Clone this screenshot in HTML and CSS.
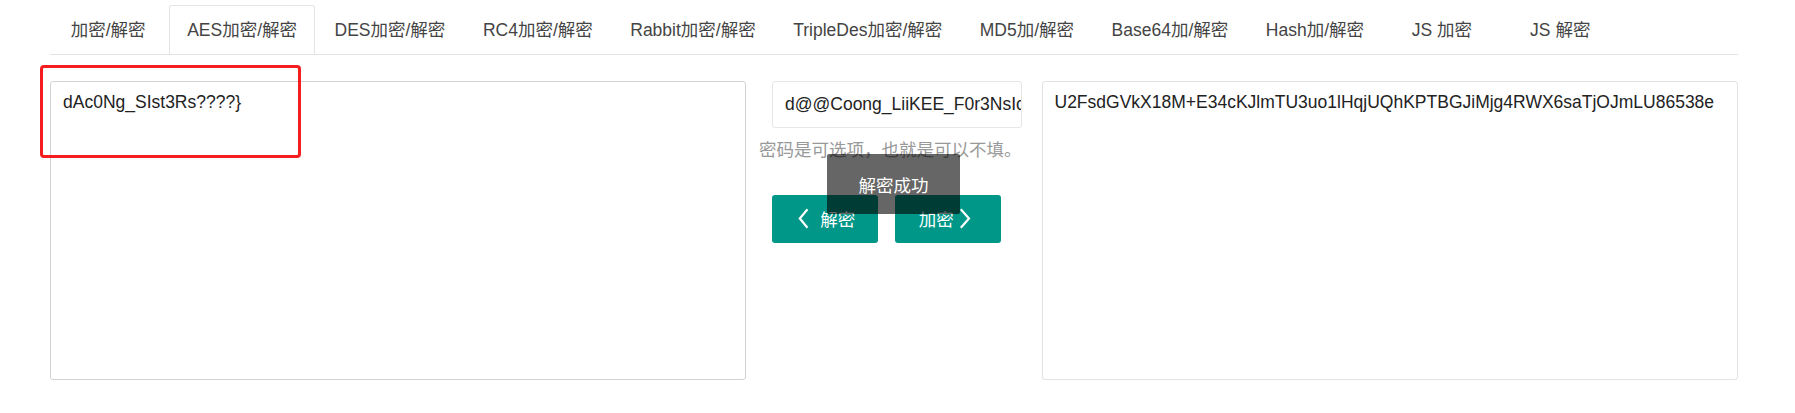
FILE: index.html
```html
<!DOCTYPE html>
<html lang="zh-CN">
<head>
<meta charset="utf-8">
<title>AES加密/解密</title>
<link rel="stylesheet" href="styles.css">
</head>
<body>
<div class="page">
  <ul class="tabs">
    <li class="tab tab-first">加密/解密</li>
    <li class="tab active">AES加密/解密</li>
    <li class="tab">DES加密/解密</li>
    <li class="tab">RC4加密/解密</li>
    <li class="tab">Rabbit加密/解密</li>
    <li class="tab">TripleDes加密/解密</li>
    <li class="tab">MD5加/解密</li>
    <li class="tab">Base64加/解密</li>
    <li class="tab">Hash加/解密</li>
    <li class="tab tab-js">JS 加密</li>
    <li class="tab tab-js">JS 解密</li>
  </ul>

  <div class="main">
    <textarea class="box box-left" readonly>dAc0Ng_SIst3Rs????}</textarea>

    <div class="middle">
      <input class="pwd" type="text" value="d@@Coong_LiiKEE_F0r3NsIcs" readonly>
      <div class="hint">密码是可选项，也就是可以不填。</div>
      <div class="buttons">
        <button class="btn btn-left">
          <svg class="chev" width="11" height="21" viewBox="0 0 11 21"><polyline points="9.5,1.2 1.8,10.5 9.5,19.8" fill="none" stroke="#fff" stroke-width="2.2" stroke-linejoin="miter"/></svg>
          <span>解密</span>
        </button>
        <button class="btn btn-right">
          <span>加密</span>
          <svg class="chev" width="12" height="21" viewBox="0 0 12 21"><polyline points="1.8,1.2 10,10.5 1.8,19.8" fill="none" stroke="#fff" stroke-width="2.2" stroke-linejoin="miter"/></svg>
        </button>
      </div>
    </div>

    <textarea class="box box-right" readonly>U2FsdGVkX18M+E34cKJlmTU3uo1lHqjUQhKPTBGJiMjg4RWX6saTjOJmLU86538e</textarea>
  </div>
</div>

<div class="mark"></div>
<div class="toast">解密成功</div>
</body>
</html>
```

FILE: styles.css
```css
* {
  box-sizing: border-box;
}

html, body {
  margin: 0;
  padding: 0;
  background: #ffffff;
}

body {
  font-family: "Liberation Sans", Arial, "Noto Sans CJK SC", sans-serif;
  font-size: 17.5px;
  color: #333;
  width: 1795px;
  height: 413px;
  overflow: hidden;
  position: relative;
}

.page {
  padding: 5px 0 0 50px;
  width: 1738px;
}

.tabs {
  list-style: none;
  margin: 0;
  padding: 0;
  display: flex;
  height: 50px;
  border-bottom: 1px solid #e4e4e4;
}

.tab {
  height: 49px;
  line-height: 48px;
  padding: 0 16.75px;
  margin-right: 2px;
  border: 1px solid transparent;
  border-bottom: none;
  border-radius: 3px 3px 0 0;
  color: #444;
  white-space: nowrap;
}

.tab-first {
  margin-left: 3px;
  margin-right: 6px;
}

.tab.active {
  border-color: #e4e4e4;
  background: #fff;
  color: #444;
}

.tab-js {
  padding: 0 27px;
}

.main {
  display: flex;
  align-items: flex-start;
  margin-top: 26px;
}

.box {
  display: block;
  width: 696px;
  height: 299px;
  margin: 0;
  padding: 8px 12px;
  font-family: inherit;
  font-size: 17.5px;
  line-height: 25px;
  color: #222;
  background: #fff;
  border: 1px solid #d2d2d2;
  border-radius: 3px;
  resize: none;
  outline: none;
  overflow: hidden;
}

.box-right {
  margin-left: 19.5px;
  border-color: #e2e2e2;
}

.middle {
  width: 250px;
  margin-left: 26px;
  display: flex;
  flex-direction: column;
}

.pwd {
  display: block;
  width: 250px;
  height: 47px;
  margin: 0;
  padding: 0 0 0 12px;
  font-family: inherit;
  font-size: 17.5px;
  color: #222;
  background: #fff;
  border: 1px solid #e6e6e6;
  border-radius: 3px;
  outline: none;
}

.hint {
  margin: 10px 0 0 -13px;
  width: 280px;
  line-height: 25px;
  color: #999;
  white-space: nowrap;
}

.buttons {
  display: flex;
  gap: 17.5px;
  margin-top: 31.5px;
}

.btn {
  width: 105.5px;
  height: 48px;
  margin: 0;
  padding: 0;
  border: none;
  border-radius: 3px;
  background: #009688;
  color: #fff;
  font-family: inherit;
  font-size: 17.5px;
  display: flex;
  align-items: center;
  justify-content: center;
}

.btn-left {
  gap: 11px;
  padding-left: 4px;
}

.btn-right {
  gap: 5px;
  padding-right: 6px;
}

.chev {
  display: block;
}

.mark {
  position: absolute;
  left: 40px;
  top: 65px;
  width: 261px;
  height: 93px;
  border: 3px solid #f51d1d;
  border-radius: 4px;
}

.toast {
  position: absolute;
  left: 827px;
  top: 154px;
  width: 133px;
  height: 60px;
  display: flex;
  align-items: center;
  justify-content: center;
  background: rgba(0, 0, 0, 0.6);
  color: #fff;
  font-size: 17.5px;
  border-radius: 2px;
}
```
